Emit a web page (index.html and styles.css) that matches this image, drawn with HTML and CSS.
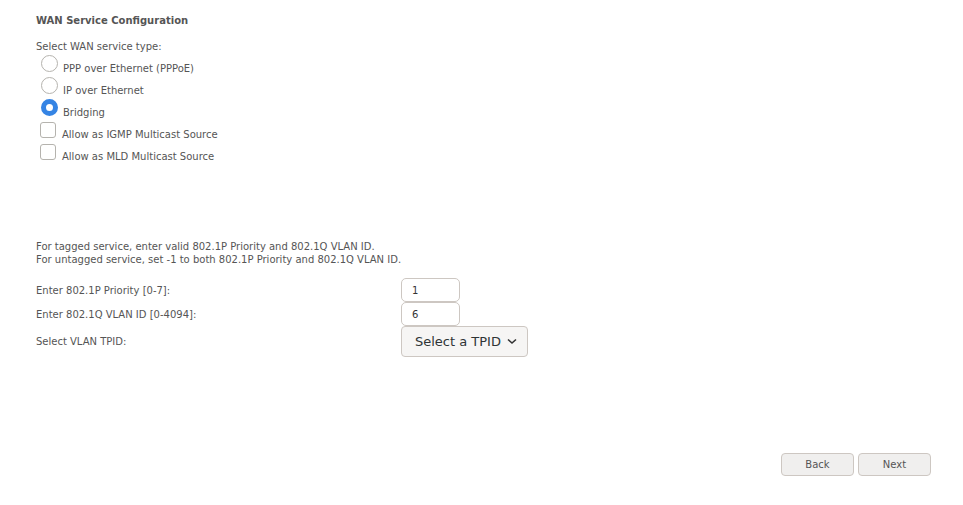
FILE: index.html
```html
<!DOCTYPE html>
<html lang="en">
<head>
    <meta charset="UTF-8">
    <title>WAN Service Configuration</title>
    <link rel="stylesheet" href="styles.css">
</head>
<body>
    <div class="page">
        <!-- Title -->
        <h1 class="title">WAN Service Configuration</h1>

        <!-- Service type -->
        <p class="lead">Select WAN service type:</p>
        <div class="options">
            <label class="opt"><span class="radio"></span>PPP over Ethernet (PPPoE)</label>
            <label class="opt"><span class="radio"></span>IP over Ethernet</label>
            <label class="opt"><span class="radio checked"></span>Bridging</label>
            <label class="opt"><span class="check"></span>Allow as IGMP Multicast Source</label>
            <label class="opt"><span class="check"></span>Allow as MLD Multicast Source</label>
        </div>

        <!-- VLAN -->
        <p class="note">For tagged service, enter valid 802.1P Priority and 802.1Q VLAN ID.<br>
        For untagged service, set -1 to both 802.1P Priority and 802.1Q VLAN ID.</p>

        <div class="vlan">
            <div class="row">
                <span class="lbl">Enter 802.1P Priority [0-7]:</span>
                <div class="field">1</div>
            </div>
            <div class="row">
                <span class="lbl">Enter 802.1Q VLAN ID [0-4094]:</span>
                <div class="field">6</div>
            </div>
            <div class="row">
                <span class="lbl">Select VLAN TPID:</span>
                <div class="select">Select a TPID
                    <svg width="10" height="7" viewBox="0 0 10 7"><path d="M1 1.5 L5 5 L9 1.5" fill="none" stroke="#333" stroke-width="1.6"/></svg>
                </div>
            </div>
        </div>

        <!-- Buttons -->
        <div class="buttons">
            <button class="btn">Back</button>
            <button class="btn">Next</button>
        </div>
    </div>
</body>
</html>
```

FILE: styles.css
```css
/* General */
body {
    margin: 0;
    background-color: #fff;
    color: #555;
    font-family: "DejaVu Sans", sans-serif;
    font-size: 10px;
}

.page {
    padding: 15px 32px 0 36px;
}

.title {
    margin: 0;
    font-size: 10px;
    font-weight: bold;
    line-height: 12px;
}

.lead {
    margin: 14px 0 0;
    line-height: 12px;
}

/* Radio / checkbox list */
.options {
    display: flex;
    flex-direction: column;
    margin-top: -1px;
    margin-left: 4px;
}

.opt {
    display: flex;
    align-items: flex-end;
    height: 22px;
}

.radio,
.check {
    display: inline-block;
    box-sizing: border-box;
    width: 17px;
    height: 17px;
    margin-right: 6px;
    border: 1px solid #b5b3ae;
    background-color: #fff;
}

.radio {
    border-radius: 50%;
    margin-left: 1px;
    margin-right: 5px;
    margin-bottom: 2px;
}

.radio.checked {
    border: 5px solid #3584e4;
}

.check {
    border-radius: 3px;
    width: 16px;
    height: 16px;
    margin-bottom: 2px;
}

/* VLAN section */
.note {
    margin: 78px 0 0;
    line-height: 13px;
}

.vlan {
    margin-top: 12px;
    display: flex;
    flex-direction: column;
}

.row {
    display: flex;
    align-items: center;
}

.lbl {
    width: 365px;
}

.field {
    box-sizing: border-box;
    width: 59px;
    height: 24px;
    padding: 6px 10px;
    border: 1px solid #cdc7c2;
    border-radius: 5px;
    color: #333;
    font-size: 10px;
}

.select {
    box-sizing: border-box;
    display: flex;
    align-items: center;
    gap: 6px;
    height: 31px;
    padding: 0 10px 0 13px;
    border: 1px solid #cdc7c2;
    border-radius: 4px;
    background-color: #f6f5f4;
    color: #2e3436;
    font-size: 13px;
}

/* Buttons */
.buttons {
    display: flex;
    justify-content: flex-end;
    gap: 4px;
    margin-top: 96px;
}

.btn {
    width: 73px;
    height: 23px;
    border: 1px solid #cdc7c2;
    border-radius: 4px;
    background-color: #f0efee;
    color: #555;
    font-family: "DejaVu Sans", sans-serif;
    font-size: 10px;
}
```
